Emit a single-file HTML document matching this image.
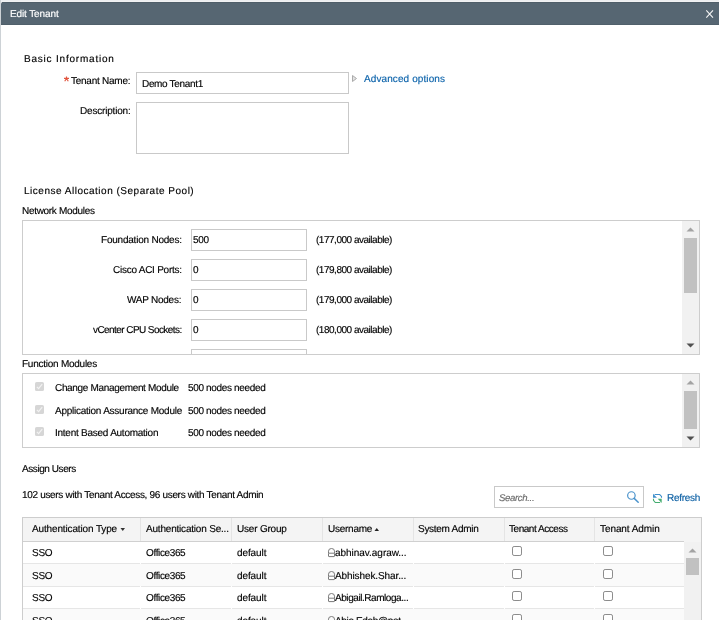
<!DOCTYPE html>
<html><head><meta charset="utf-8"><style>
html,body{margin:0;padding:0;}
body{width:719px;height:620px;overflow:hidden;position:relative;background:#fff;font-family:"Liberation Sans",sans-serif;}
.t{position:absolute;white-space:pre;will-change:transform;text-rendering:geometricPrecision;-webkit-text-stroke:0.15px currentColor;}
.r{position:absolute;}
svg.r{display:block;}
</style></head><body>
<div class="r" style="left:0px;top:0px;width:719px;height:1px;background:#eceef0;"></div>
<div class="r" style="left:0px;top:1px;width:719px;height:1px;background:#f1f2f3;"></div>
<div class="r" style="left:0px;top:0px;width:1px;height:620px;background:#cdd2d6;"></div>
<div class="r" style="left:1px;top:2px;width:718px;height:23px;background:#566672;border-top-left-radius:2px;"></div>
<div class="r" style="left:1px;top:24px;width:718px;height:1px;background:#50606b;"></div>
<div class="r" style="left:2px;top:2px;width:717px;height:1px;background:#4f5e69;"></div>
<div class="t" style="left:10px;top:9.54px;font-size:10.0px;line-height:10.0px;color:#fff;letter-spacing:-0.12px;">Edit Tenant</div>
<svg class="r" style="left:704px;top:8px" width="12" height="12"><path d="M2.3 2.3 L9.0 9.7 M9.0 2.3 L2.3 9.7" stroke="#f4f4f4" stroke-width="1.1"/></svg>
<div class="t" style="left:24px;top:54.53px;font-size:10px;line-height:10px;color:#000;letter-spacing:0.79px;">Basic Information</div>
<svg class="r" style="left:63px;top:76px" width="8" height="7"><path d="M3.5 0.6 V2.8 M1 2.4 H6 M3.4 2.8 L1.7 5.3 M3.6 2.8 L5.3 5.3" fill="none" stroke="#e2553f" stroke-width="1.15"/></svg>
<div class="t" style="right:588.5px;top:76.53px;font-size:10.0px;line-height:10.0px;color:#000;letter-spacing:-0.25px;">Tenant Name:</div>
<div class="r" style="left:136px;top:72px;width:213px;height:22px;border:1px solid #c9c9c9;box-sizing:border-box;"></div>
<div class="t" style="left:141.5px;top:79.53px;font-size:10.0px;line-height:10.0px;color:#000;letter-spacing:-0.33px;">Demo Tenant1</div>
<svg class="r" style="left:351px;top:74px" width="8" height="9"><path d="M1.5 1.5 L5.5 4.5 L1.5 7.5 Z" fill="#e2e2e2" stroke="#ababab" stroke-width="1"/></svg>
<div class="t" style="left:364px;top:74.53px;font-size:10.0px;line-height:10.0px;color:#0b62aa;letter-spacing:0.1px;">Advanced options</div>
<div class="t" style="right:588.5px;top:106.53px;font-size:10.0px;line-height:10.0px;color:#000;letter-spacing:-0.19px;">Description:</div>
<div class="r" style="left:136px;top:102px;width:213px;height:52px;border:1px solid #c9c9c9;box-sizing:border-box;"></div>
<div class="t" style="left:23.5px;top:186.53px;font-size:10px;line-height:10px;color:#000;letter-spacing:0.51px;">License Allocation (Separate Pool)</div>
<div class="t" style="left:21.5px;top:206.53px;font-size:10.0px;line-height:10.0px;color:#000;letter-spacing:-0.31px;">Network Modules</div>
<div class="r" style="left:22px;top:220px;width:678px;height:135px;border:1px solid #cdcdcd;box-sizing:border-box;"></div>
<div class="t" style="right:537.5px;top:235.53px;font-size:10.0px;line-height:10.0px;color:#000;letter-spacing:-0.22px;">Foundation Nodes:</div>
<div class="r" style="left:191px;top:229px;width:116px;height:22px;border:1px solid #c9c9c9;box-sizing:border-box;"></div>
<div class="t" style="left:193.3px;top:235.53px;font-size:10.0px;line-height:10.0px;color:#000;letter-spacing:-0.25px;">500</div>
<div class="t" style="left:315.8px;top:235.53px;font-size:10.0px;line-height:10.0px;color:#000;letter-spacing:-0.48px;">(177,000 available)</div>
<div class="t" style="right:537.5px;top:265.54px;font-size:10.0px;line-height:10.0px;color:#000;letter-spacing:-0.25px;">Cisco ACI Ports:</div>
<div class="r" style="left:191px;top:259px;width:116px;height:22px;border:1px solid #c9c9c9;box-sizing:border-box;"></div>
<div class="t" style="left:193.3px;top:265.54px;font-size:10.0px;line-height:10.0px;color:#000;letter-spacing:-0.25px;">0</div>
<div class="t" style="left:315.8px;top:265.54px;font-size:10.0px;line-height:10.0px;color:#000;letter-spacing:-0.48px;">(179,800 available)</div>
<div class="t" style="right:537.5px;top:295.54px;font-size:10.0px;line-height:10.0px;color:#000;letter-spacing:-0.25px;">WAP Nodes:</div>
<div class="r" style="left:191px;top:289px;width:116px;height:22px;border:1px solid #c9c9c9;box-sizing:border-box;"></div>
<div class="t" style="left:193.3px;top:295.54px;font-size:10.0px;line-height:10.0px;color:#000;letter-spacing:-0.25px;">0</div>
<div class="t" style="left:315.8px;top:295.54px;font-size:10.0px;line-height:10.0px;color:#000;letter-spacing:-0.48px;">(179,000 available)</div>
<div class="t" style="right:537.5px;top:325.54px;font-size:10.0px;line-height:10.0px;color:#000;letter-spacing:-0.57px;">vCenter CPU Sockets:</div>
<div class="r" style="left:191px;top:319px;width:116px;height:22px;border:1px solid #c9c9c9;box-sizing:border-box;"></div>
<div class="t" style="left:193.3px;top:325.54px;font-size:10.0px;line-height:10.0px;color:#000;letter-spacing:-0.25px;">0</div>
<div class="t" style="left:315.8px;top:325.54px;font-size:10.0px;line-height:10.0px;color:#000;letter-spacing:-0.48px;">(180,000 available)</div>
<div class="r" style="left:191px;top:349px;width:116px;height:22px;border:1px solid #c9c9c9;box-sizing:border-box;"></div>
<div class="r" style="left:23px;top:354px;width:660px;height:1px;background:#cdcdcd;"></div>
<div class="r" style="left:23px;top:355px;width:676px;height:17px;background:#fff;"></div>
<div class="r" style="left:682px;top:221px;width:17px;height:133px;background:#f1f1f1;"></div>
<div class="r" style="left:684px;top:238px;width:13px;height:55px;background:#c1c1c1;"></div>
<svg class="r" style="left:682px;top:221px" width="17" height="17"><path d="M4.5 10.5 L8.5 6.5 L12.5 10.5 Z" fill="#a3a3a3"/></svg>
<svg class="r" style="left:682px;top:337px" width="17" height="17"><path d="M4.5 6.5 L8.5 10.5 L12.5 6.5 Z" fill="#505050"/></svg>
<div class="t" style="left:21.5px;top:359.54px;font-size:10.0px;line-height:10.0px;color:#000;letter-spacing:-0.25px;">Function Modules</div>
<div class="r" style="left:22px;top:373px;width:678px;height:75px;border:1px solid #cdcdcd;box-sizing:border-box;"></div>
<div class="r" style="left:682px;top:374px;width:17px;height:73px;background:#f1f1f1;"></div>
<div class="r" style="left:684px;top:391px;width:13px;height:38px;background:#c1c1c1;"></div>
<svg class="r" style="left:682px;top:374px" width="17" height="17"><path d="M4.5 10.5 L8.5 6.5 L12.5 10.5 Z" fill="#a3a3a3"/></svg>
<svg class="r" style="left:682px;top:430px" width="17" height="17"><path d="M4.5 6.5 L8.5 10.5 L12.5 6.5 Z" fill="#505050"/></svg>
<svg class="r" style="left:35px;top:382px" width="9" height="9"><rect x="0" y="0" width="9" height="9" rx="1.6" fill="#d6d6d6"/><path d="M1.9 4.8 L3.6 6.6 L7.2 2.2" fill="none" stroke="#f2f2f2" stroke-width="1.2"/></svg>
<div class="t" style="left:54.5px;top:383.54px;font-size:10.0px;line-height:10.0px;color:#000;letter-spacing:-0.33px;">Change Management Module</div>
<div class="t" style="left:188px;top:383.54px;font-size:10.0px;line-height:10.0px;color:#000;letter-spacing:-0.34px;">500 nodes needed</div>
<svg class="r" style="left:35px;top:405px" width="9" height="9"><rect x="0" y="0" width="9" height="9" rx="1.6" fill="#d6d6d6"/><path d="M1.9 4.8 L3.6 6.6 L7.2 2.2" fill="none" stroke="#f2f2f2" stroke-width="1.2"/></svg>
<div class="t" style="left:54.5px;top:406.54px;font-size:10.0px;line-height:10.0px;color:#000;letter-spacing:-0.25px;">Application Assurance Module</div>
<div class="t" style="left:188px;top:406.54px;font-size:10.0px;line-height:10.0px;color:#000;letter-spacing:-0.34px;">500 nodes needed</div>
<svg class="r" style="left:35px;top:427px" width="9" height="9"><rect x="0" y="0" width="9" height="9" rx="1.6" fill="#d6d6d6"/><path d="M1.9 4.8 L3.6 6.6 L7.2 2.2" fill="none" stroke="#f2f2f2" stroke-width="1.2"/></svg>
<div class="t" style="left:54.5px;top:428.54px;font-size:10.0px;line-height:10.0px;color:#000;letter-spacing:-0.25px;">Intent Based Automation</div>
<div class="t" style="left:188px;top:428.54px;font-size:10.0px;line-height:10.0px;color:#000;letter-spacing:-0.34px;">500 nodes needed</div>
<div class="t" style="left:21.5px;top:464.54px;font-size:10.0px;line-height:10.0px;color:#000;letter-spacing:-0.43px;">Assign Users</div>
<div class="t" style="left:21.5px;top:490.54px;font-size:10.0px;line-height:10.0px;color:#000;letter-spacing:-0.32px;">102 users with Tenant Access, 96 users with Tenant Admin</div>
<div class="r" style="left:494px;top:486px;width:150px;height:22px;border:1px solid #c9c9c9;box-sizing:border-box;"></div>
<div class="t" style="left:499px;top:493.87px;font-size:9.6px;line-height:9.6px;color:#6a6a6a;letter-spacing:-0.35px;font-style:italic;">Search...</div>
<svg class="r" style="left:624px;top:488px" width="18" height="18"><circle cx="7.4" cy="7.5" r="3.75" fill="none" stroke="#4a93cc" stroke-width="1.2"/><path d="M10.2 10.4 L14.2 14.2" stroke="#4a93cc" stroke-width="1.5" stroke-linecap="round"/></svg>
<svg class="r" style="left:648px;top:490px" width="18" height="16"><path d="M13.5 7.8 V6.4 L11.7 4.5 H6.6" fill="none" stroke="#3f8fcc" stroke-width="1.1"/><path d="M5 3.8 L5 7.8 L9 7.8 Z" fill="#3f8fcc"/><path d="M5.5 8.8 V10.4 L7.3 12.5 H12.2" fill="none" stroke="#45ad70" stroke-width="1.1"/><path d="M13.7 8.7 L13.7 12.9 L9.7 8.7 Z" fill="#45ad70"/></svg>
<div class="t" style="left:667px;top:493.54px;font-size:10.0px;line-height:10.0px;color:#0b5fa3;letter-spacing:-0.28px;">Refresh</div>
<div class="r" style="left:22px;top:517px;width:680px;height:103px;border:1px solid #cdcdcd;border-bottom:none;box-sizing:border-box;"></div>
<div class="r" style="left:23px;top:518px;width:678px;height:24px;background:#f4f4f4;"></div>
<div class="r" style="left:23px;top:541px;width:661px;height:1px;background:#d0d0d0;"></div>
<div class="r" style="left:140px;top:518px;width:1px;height:23px;background:#e4e4e4;"></div>
<div class="r" style="left:231px;top:518px;width:1px;height:23px;background:#e4e4e4;"></div>
<div class="r" style="left:322px;top:518px;width:1px;height:23px;background:#e4e4e4;"></div>
<div class="r" style="left:413px;top:518px;width:1px;height:23px;background:#e4e4e4;"></div>
<div class="r" style="left:504px;top:518px;width:1px;height:23px;background:#e4e4e4;"></div>
<div class="r" style="left:594px;top:518px;width:1px;height:23px;background:#e4e4e4;"></div>
<div class="t" style="left:32.2px;top:524.53px;font-size:10.0px;line-height:10.0px;color:#000;letter-spacing:-0.14px;">Authentication Type</div>
<div class="t" style="left:145.6px;top:524.53px;font-size:10.0px;line-height:10.0px;color:#000;letter-spacing:-0.2px;">Authentication Se...</div>
<div class="t" style="left:237.3px;top:524.53px;font-size:10.0px;line-height:10.0px;color:#000;letter-spacing:-0.2px;">User Group</div>
<div class="t" style="left:327.8px;top:524.53px;font-size:10.0px;line-height:10.0px;color:#000;letter-spacing:-0.25px;">Username</div>
<div class="t" style="left:417.9px;top:524.53px;font-size:10.0px;line-height:10.0px;color:#000;letter-spacing:-0.28px;">System Admin</div>
<div class="t" style="left:509.2px;top:524.53px;font-size:10.0px;line-height:10.0px;color:#000;letter-spacing:-0.46px;">Tenant Access</div>
<div class="t" style="left:600px;top:524.53px;font-size:10.0px;line-height:10.0px;color:#000;letter-spacing:-0.08px;">Tenant Admin</div>
<svg class="r" style="left:119px;top:526px" width="8" height="7"><path d="M1.5 2 L6 2 L3.75 5 Z" fill="#333"/></svg>
<svg class="r" style="left:373px;top:526px" width="8" height="7"><path d="M1.5 5 L6 5 L3.75 2 Z" fill="#222"/></svg>
<div class="r" style="left:23px;top:542px;width:661px;height:21px;background:#ffffff;"></div>
<div class="t" style="left:32px;top:548.53px;font-size:10.0px;line-height:10.0px;color:#000;letter-spacing:-0.25px;">SSO</div>
<div class="t" style="left:145.8px;top:548.53px;font-size:10.0px;line-height:10.0px;color:#000;letter-spacing:-0.37px;">Office365</div>
<div class="t" style="left:236.6px;top:548.53px;font-size:10.0px;line-height:10.0px;color:#000;letter-spacing:-0.1px;">default</div>
<svg class="r" style="left:327px;top:547px" width="9" height="11"><path d="M1.5 6.5 V4.2 A3 2.7 0 0 1 7.5 4.2 V6.5" fill="none" stroke="#7a7a7a" stroke-width="1"/><rect x="1.5" y="6.2" width="6" height="3.4" rx="0.5" fill="#fff" stroke="#7a7a7a" stroke-width="1"/></svg>
<div class="t" style="left:334.8px;top:548.53px;font-size:10.0px;line-height:10.0px;color:#000;letter-spacing:-0.03px;">abhinav.agraw...</div>
<svg class="r" style="left:512px;top:546px" width="10" height="10"><rect x="0.5" y="0.5" width="9" height="9" rx="1.6" fill="#fff" stroke="#8c8c8c" stroke-width="1"/></svg>
<svg class="r" style="left:603px;top:546px" width="10" height="10"><rect x="0.5" y="0.5" width="9" height="9" rx="1.6" fill="#fff" stroke="#8c8c8c" stroke-width="1"/></svg>
<div class="r" style="left:23px;top:563px;width:661px;height:23px;background:#fafafa;"></div>
<div class="t" style="left:32px;top:571.53px;font-size:10.0px;line-height:10.0px;color:#000;letter-spacing:-0.25px;">SSO</div>
<div class="t" style="left:145.8px;top:571.53px;font-size:10.0px;line-height:10.0px;color:#000;letter-spacing:-0.37px;">Office365</div>
<div class="t" style="left:236.6px;top:571.53px;font-size:10.0px;line-height:10.0px;color:#000;letter-spacing:-0.1px;">default</div>
<svg class="r" style="left:327px;top:570px" width="9" height="11"><path d="M1.5 6.5 V4.2 A3 2.7 0 0 1 7.5 4.2 V6.5" fill="none" stroke="#7a7a7a" stroke-width="1"/><rect x="1.5" y="6.2" width="6" height="3.4" rx="0.5" fill="#fff" stroke="#7a7a7a" stroke-width="1"/></svg>
<div class="t" style="left:334.8px;top:571.53px;font-size:10.0px;line-height:10.0px;color:#000;letter-spacing:-0.1px;">Abhishek.Shar...</div>
<svg class="r" style="left:512px;top:569px" width="10" height="10"><rect x="0.5" y="0.5" width="9" height="9" rx="1.6" fill="#fff" stroke="#8c8c8c" stroke-width="1"/></svg>
<svg class="r" style="left:603px;top:569px" width="10" height="10"><rect x="0.5" y="0.5" width="9" height="9" rx="1.6" fill="#fff" stroke="#8c8c8c" stroke-width="1"/></svg>
<div class="r" style="left:23px;top:586px;width:661px;height:22px;background:#ffffff;"></div>
<div class="t" style="left:32px;top:593.53px;font-size:10.0px;line-height:10.0px;color:#000;letter-spacing:-0.25px;">SSO</div>
<div class="t" style="left:145.8px;top:593.53px;font-size:10.0px;line-height:10.0px;color:#000;letter-spacing:-0.37px;">Office365</div>
<div class="t" style="left:236.6px;top:593.53px;font-size:10.0px;line-height:10.0px;color:#000;letter-spacing:-0.1px;">default</div>
<svg class="r" style="left:327px;top:592px" width="9" height="11"><path d="M1.5 6.5 V4.2 A3 2.7 0 0 1 7.5 4.2 V6.5" fill="none" stroke="#7a7a7a" stroke-width="1"/><rect x="1.5" y="6.2" width="6" height="3.4" rx="0.5" fill="#fff" stroke="#7a7a7a" stroke-width="1"/></svg>
<div class="t" style="left:334.8px;top:593.53px;font-size:10.0px;line-height:10.0px;color:#000;letter-spacing:-0.44px;">Abigail.Ramloga...</div>
<svg class="r" style="left:512px;top:591px" width="10" height="10"><rect x="0.5" y="0.5" width="9" height="9" rx="1.6" fill="#fff" stroke="#8c8c8c" stroke-width="1"/></svg>
<svg class="r" style="left:603px;top:591px" width="10" height="10"><rect x="0.5" y="0.5" width="9" height="9" rx="1.6" fill="#fff" stroke="#8c8c8c" stroke-width="1"/></svg>
<div class="r" style="left:23px;top:608px;width:661px;height:23px;background:#fafafa;"></div>
<div class="t" style="left:32px;top:616.53px;font-size:10.0px;line-height:10.0px;color:#000;letter-spacing:-0.25px;">SSO</div>
<div class="t" style="left:145.8px;top:616.53px;font-size:10.0px;line-height:10.0px;color:#000;letter-spacing:-0.37px;">Office365</div>
<div class="t" style="left:236.6px;top:616.53px;font-size:10.0px;line-height:10.0px;color:#000;letter-spacing:-0.1px;">default</div>
<svg class="r" style="left:327px;top:615px" width="9" height="11"><path d="M1.5 6.5 V4.2 A3 2.7 0 0 1 7.5 4.2 V6.5" fill="none" stroke="#7a7a7a" stroke-width="1"/><rect x="1.5" y="6.2" width="6" height="3.4" rx="0.5" fill="#fff" stroke="#7a7a7a" stroke-width="1"/></svg>
<div class="t" style="left:334.8px;top:616.53px;font-size:10.0px;line-height:10.0px;color:#000;letter-spacing:-0.35px;">Abie.Edeh@not...</div>
<svg class="r" style="left:512px;top:614px" width="10" height="10"><rect x="0.5" y="0.5" width="9" height="9" rx="1.6" fill="#fff" stroke="#8c8c8c" stroke-width="1"/></svg>
<svg class="r" style="left:603px;top:614px" width="10" height="10"><rect x="0.5" y="0.5" width="9" height="9" rx="1.6" fill="#fff" stroke="#8c8c8c" stroke-width="1"/></svg>
<div class="r" style="left:23px;top:563px;width:661px;height:1px;background:#e6e6e6;"></div>
<div class="r" style="left:23px;top:586px;width:661px;height:1px;background:#e6e6e6;"></div>
<div class="r" style="left:23px;top:608px;width:661px;height:1px;background:#e6e6e6;"></div>
<div class="r" style="left:140px;top:563px;width:1px;height:1px;background:#ffffff;"></div>
<div class="r" style="left:140px;top:586px;width:1px;height:1px;background:#ffffff;"></div>
<div class="r" style="left:140px;top:608px;width:1px;height:1px;background:#ffffff;"></div>
<div class="r" style="left:231px;top:563px;width:1px;height:1px;background:#ffffff;"></div>
<div class="r" style="left:231px;top:586px;width:1px;height:1px;background:#ffffff;"></div>
<div class="r" style="left:231px;top:608px;width:1px;height:1px;background:#ffffff;"></div>
<div class="r" style="left:322px;top:563px;width:1px;height:1px;background:#ffffff;"></div>
<div class="r" style="left:322px;top:586px;width:1px;height:1px;background:#ffffff;"></div>
<div class="r" style="left:322px;top:608px;width:1px;height:1px;background:#ffffff;"></div>
<div class="r" style="left:413px;top:563px;width:1px;height:1px;background:#ffffff;"></div>
<div class="r" style="left:413px;top:586px;width:1px;height:1px;background:#ffffff;"></div>
<div class="r" style="left:413px;top:608px;width:1px;height:1px;background:#ffffff;"></div>
<div class="r" style="left:504px;top:563px;width:1px;height:1px;background:#ffffff;"></div>
<div class="r" style="left:504px;top:586px;width:1px;height:1px;background:#ffffff;"></div>
<div class="r" style="left:504px;top:608px;width:1px;height:1px;background:#ffffff;"></div>
<div class="r" style="left:594px;top:563px;width:1px;height:1px;background:#ffffff;"></div>
<div class="r" style="left:594px;top:586px;width:1px;height:1px;background:#ffffff;"></div>
<div class="r" style="left:594px;top:608px;width:1px;height:1px;background:#ffffff;"></div>
<div class="r" style="left:684px;top:542px;width:17px;height:78px;background:#f1f1f1;"></div>
<div class="r" style="left:686px;top:558px;width:13px;height:17px;background:#c1c1c1;"></div>
<svg class="r" style="left:684px;top:542px" width="17" height="17"><path d="M4.5 10.5 L8.5 6.5 L12.5 10.5 Z" fill="#a3a3a3"/></svg>
</body></html>
